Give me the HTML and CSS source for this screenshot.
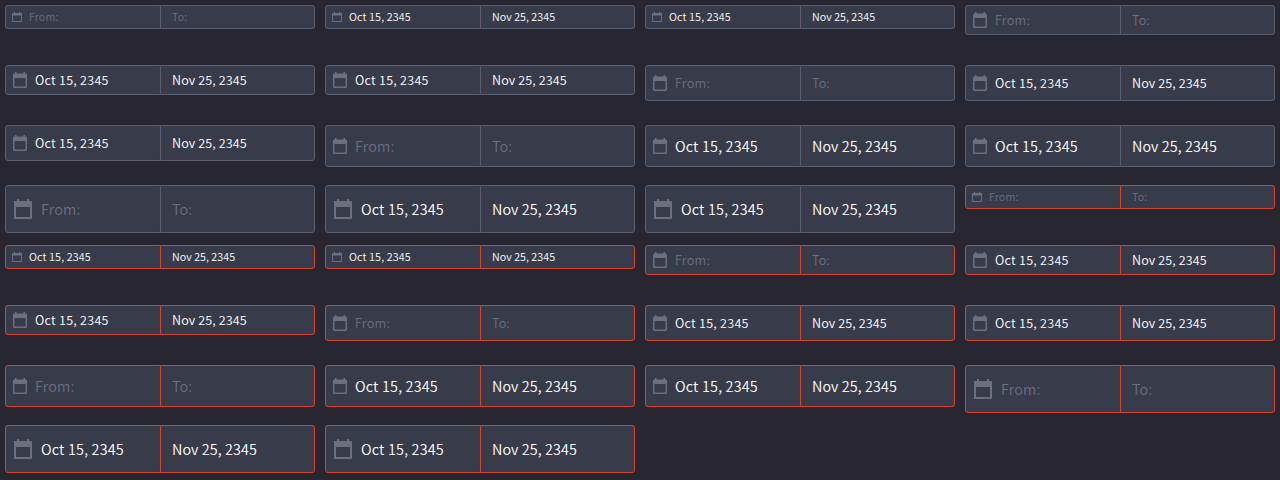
FILE: index.html
```html
<!DOCTYPE html>
<html lang="en">
<head>
<meta charset="utf-8">
<title>Range date picker</title>
<link rel="stylesheet" href="styles.css">
</head>
<body>
<main class="grid" id="grid"></main>
<script src="pickers.js"></script>
</body>
</html>
```
FILE: styles.css
```css
* { box-sizing: border-box; }

body {
  margin: 0;
  background: #272631;
  font-family: "Noto Sans CJK SC", "Noto Sans", sans-serif;
  font-weight: 350;
}

.grid {
  display: grid;
  grid-template-columns: repeat(4, 320px);
  grid-auto-rows: 60px;
}

.cell { padding: 5px; }

.picker {
  --edge: #5a5e6e;
  --notch: linear-gradient(#2e303d, #2e303d);
  display: flex;
  width: 310px;
  color: #fff;
}

.picker.invalid { --edge: #d1462f; }
.picker.empty { color: #6c6f80; }

.field {
  display: flex;
  align-items: center;
  border: 1px solid var(--edge);
  background: #383b4a;
  white-space: nowrap;
}

.from {
  flex: 0 0 156px;
  padding-left: 5px;
  border-radius: 3px 0 0 3px;
  background: var(--notch) right top / 1px 1px no-repeat, var(--notch) right bottom / 1px 1px no-repeat, #383b4a;
}

.to {
  flex: 0 0 155px;
  margin-left: -1px;
  padding-left: 11px;
  border-radius: 0 3px 3px 0;
  background: var(--notch) left top / 1px 1px no-repeat, var(--notch) left bottom / 1px 1px no-repeat, #383b4a;
}

.icon {
  flex: none;
  width: 18px;
  height: 18px;
  margin-right: 6px;
  fill: #6c6f80;
}

.value { line-height: 18px; }

.size-24 { height: 24px; font-size: 10.75px; letter-spacing: 0.12px; }
.size-30, .size-36 { font-size: 12.6px; letter-spacing: 0.26px; }
.size-30 { height: 30px; }
.size-36 { height: 36px; }
.size-42, .size-48 { font-size: 14.4px; letter-spacing: 0.18px; }
.size-42 { height: 42px; }
.size-48 { height: 48px; }

.size-24 .to { letter-spacing: 0.03px; }
.size-30 .to, .size-36 .to { letter-spacing: 0.1px; }
.size-42 .to, .size-48 .to { letter-spacing: 0.08px; }

.size-24 .icon { width: 12px; height: 12px; }
.size-48 .icon { width: 24px; height: 24px; }
```
FILE: pickers.js
```js
const ICONS = {
  12: 'M10 2H9V1H8v1H4V1H3v1H2c-.55 0-1 .45-1 1v7c0 .55.45 1 1 1h8c.55 0 1-.45 1-1V3c0-.55-.45-1-1-1zm0 8H2V4.4h8z',
  18: 'M14.5 2.5H14V1h-1.5v1.5h-7V1H4v1.5h-.5C2.7 2.5 2 3.2 2 4v11.5c0 .8.7 1.5 1.5 1.5h11c.8 0 1.5-.7 1.5-1.5V4c0-.8-.7-1.5-1.5-1.5zm0 13h-11V7h11z',
  24: 'M20 4h-2V2h-2v2H8V2H6v2H4c-.6 0-1 .4-1 1v16c0 .6.4 1 1 1h16c.6 0 1-.4 1-1V5c0-.6-.4-1-1-1zm-1 16H5V10h14z',
};

function picker(size, empty, invalid) {
  const box = size === 24 ? 12 : size === 48 ? 24 : 18;
  const cls = ['picker', `size-${size}`, empty && 'empty', invalid && 'invalid'].filter(Boolean).join(' ');
  return `<div class="cell"><div class="${cls}">
    <div class="field from"><svg class="icon" viewBox="0 0 ${box} ${box}"><path fill-rule="evenodd" d="${ICONS[box]}"/></svg><span class="value">${empty ? 'From:' : 'Oct 15, 2345'}</span></div>
    <div class="field to"><span class="value">${empty ? 'To:' : 'Nov 25, 2345'}</span></div>
  </div></div>`;
}

const cells = [];
for (const invalid of [false, true]) {
  for (const size of [24, 30, 36, 42, 48]) {
    for (const empty of [true, false, false]) cells.push(picker(size, empty, invalid));
  }
}
document.getElementById('grid').innerHTML = cells.join('');
```
